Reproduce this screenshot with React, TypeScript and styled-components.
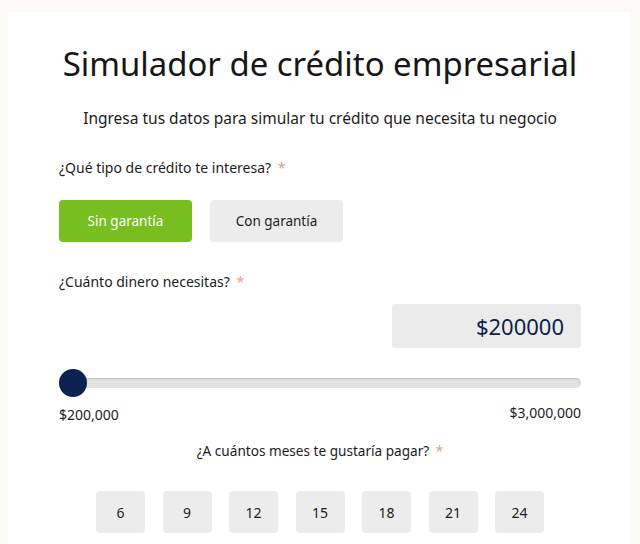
import React, { useState } from 'react';
import styled, { createGlobalStyle } from 'styled-components';

const GlobalStyle = createGlobalStyle`
  html, body {
    margin: 0;
    padding: 0;
    background: #fbfaf7;
    font-family: 'Noto Sans', 'Open Sans', sans-serif;
    color: #1c1c1c;
  }
`;

const months = [6, 9, 12, 15, 18, 21, 24];

function App() {
  const [type, setType] = useState('sin');
  const [amount, setAmount] = useState(200000);
  const [term, setTerm] = useState<number | null>(null);

  return (
    <Page>
      <GlobalStyle />
      <Card>
        <Title>Simulador de crédito empresarial</Title>
        <Subtitle>Ingresa tus datos para simular tu crédito que necesita tu negocio</Subtitle>

        <Label>
          ¿Qué tipo de crédito te interesa? <Required>*</Required>
        </Label>
        <ButtonRow>
          <TypeButton $active={type === 'sin'} onClick={() => setType('sin')}>
            Sin garantía
          </TypeButton>
          <TypeButton $active={type === 'con'} onClick={() => setType('con')}>
            Con garantía
          </TypeButton>
        </ButtonRow>

        <Label className="money">
          ¿Cuánto dinero necesitas? <Required>*</Required>
        </Label>
        <AmountRow>
          <AmountBox>${amount}</AmountBox>
        </AmountRow>
        <Slider
          type="range"
          min={200000}
          max={3000000}
          step={10000}
          value={amount}
          onChange={(e) => setAmount(Number(e.target.value))}
        />
        <RangeLabels>
          <span className="min">$200,000</span>
          <span>$3,000,000</span>
        </RangeLabels>

        <CenterLabel>
          ¿A cuántos meses te gustaría pagar? <Required>*</Required>
        </CenterLabel>
        <MonthRow>
          {months.map((m) => (
            <MonthButton key={m} $active={term === m} onClick={() => setTerm(m)}>
              {m}
            </MonthButton>
          ))}
        </MonthRow>
      </Card>
    </Page>
  );
}

const Page = styled.div`
  padding: 12px 10px 0 8px;
  min-height: 532px;
`;

const Card = styled.div`
  background: #fff;
  padding: 30px 49px 40px 51px;
  display: flex;
  flex-direction: column;
`;

const Title = styled.h1`
  margin: 0;
  text-align: center;
  white-space: nowrap;
  font-size: 32.9px;
  font-weight: 400;
  line-height: 44px;
  color: #161616;
`;

const Subtitle = styled.p`
  margin: 20px 0 0;
  text-align: center;
  font-size: 15.5px;
  line-height: 24px;
`;

const Label = styled.div`
  margin-top: 28px;
  font-size: 14px;
  line-height: 20px;
  &.money {
    margin-top: 30px;
  }
`;

const CenterLabel = styled(Label)`
  margin-top: 18px;
  font-size: 13.6px;
  text-align: center;
`;

const Required = styled.span`
  color: #e89a85;
  margin-left: 3px;
`;

const ButtonRow = styled.div`
  display: flex;
  gap: 18px;
  margin-top: 22px;
`;

const TypeButton = styled.button<{ $active: boolean }>`
  width: 133px;
  height: 42px;
  border: none;
  border-radius: 4px;
  font-family: inherit;
  font-size: 13.5px;
  cursor: pointer;
  background: ${(p) => (p.$active ? '#78be20' : '#ececec')};
  color: ${(p) => (p.$active ? '#fff' : '#1c1c1c')};
`;

const AmountRow = styled.div`
  display: flex;
  justify-content: flex-end;
  margin-top: 12px;
`;

const AmountBox = styled.div`
  width: 189px;
  height: 44px;
  box-sizing: border-box;
  background: #ebebeb;
  border-radius: 3px;
  padding-right: 17px;
  display: flex;
  align-items: center;
  justify-content: flex-end;
  font-size: 22px;
  color: #0c2149;
`;

const Slider = styled.input`
  -webkit-appearance: none;
  appearance: none;
  width: 100%;
  height: 28px;
  margin: 21px 0 0;
  background: transparent;
  &::-webkit-slider-runnable-track {
    height: 10px;
    border-radius: 5px;
    background: #e3e3e3;
    box-shadow: inset 0 1px 2px rgba(0, 0, 0, 0.18);
  }
  &::-webkit-slider-thumb {
    -webkit-appearance: none;
    width: 28px;
    height: 28px;
    margin-top: -9px;
    border-radius: 50%;
    background: #0a2152;
    border: none;
  }
`;

const RangeLabels = styled.div`
  display: flex;
  justify-content: space-between;
  align-items: flex-end;
  margin-top: 6px;
  font-size: 14px;
  line-height: 20px;
  .min {
    position: relative;
    top: 2px;
  }
`;

const MonthRow = styled.div`
  display: flex;
  justify-content: center;
  gap: 17.5px;
  margin-top: 30px;
`;

const MonthButton = styled.button<{ $active: boolean }>`
  width: 49px;
  height: 42px;
  border: none;
  border-radius: 4px;
  font-family: inherit;
  font-size: 14px;
  cursor: pointer;
  background: ${(p) => (p.$active ? '#78be20' : '#ececec')};
  color: ${(p) => (p.$active ? '#fff' : '#1c1c1c')};
`;

export default App;
